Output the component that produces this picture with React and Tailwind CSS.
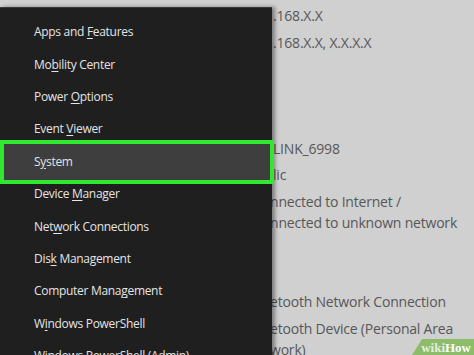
const items = [
  ["Apps and ", "F", "eatures"],
  ["Mo", "b", "ility Center"],
  ["Power ", "O", "ptions"],
  ["Event ", "V", "iewer"],
  ["S", "y", "stem"],
  ["Device ", "M", "anager"],
  ["Net", "w", "ork Connections"],
  ["Dis", "k", " Management"],
  ["Computer Mana", "g", "ement"],
  ["W", "i", "ndows PowerShell"],
  ["Windows PowerShell (", "A", "dmin)"],
];

// text of the network page that sits behind the menu
const rows = [
  [".168.X.X"],
  [".168.X.X, X.X.X.X"],
  [],
  [],
  [],
  ["LINK_6998"],
  ["lic"],
  ["nnected to Internet /", "nnected to unknown network"],
  [],
  [],
  ["etooth Network Connection"],
  ["etooth Device (Personal Area", "work)"],
];

function MenuItem({ parts, active }) {
  const [pre, key, post] = parts;
  return (
    <div className="relative flex h-[32.4px] items-center pl-[34px]">
      {active && (
        <span className="absolute -top-[6px] -bottom-[6px] left-0 -right-[2px] border-4 border-[#2fe82f] bg-[#3e3e3e]" />
      )}
      <span className="relative whitespace-nowrap">
        {pre}
        <span className="underline decoration-1 underline-offset-[2px]">{key}</span>
        {post}
      </span>
    </div>
  );
}

export default function App() {
  return (
    <div className="relative h-[355px] w-[474px] overflow-hidden bg-[#d0d0d0] font-['Open_Sans',sans-serif]">
      {/* page behind */}
      <div className="flex flex-col gap-[5.5px] pl-[273px] pt-[5px] text-[14px] tracking-[-0.2px] text-[#575757]">
        {rows.map((r, i) => (
          <div key={i} className="min-h-[21px]">
            {r.map((t, j) => (
              <div key={j} className={`whitespace-nowrap leading-[21px] ${t.startsWith("nnected") || t.startsWith("etooth") || t === "work)" ? "-ml-[3px]" : ""}`}>
                {t}
              </div>
            ))}
          </div>
        ))}
      </div>

      {/* Win+X menu */}
      <div className="absolute left-0 top-[7px] bottom-[-20px] w-[272px] border-t border-[#3a3a3a] bg-[#1f1f1f] pt-[8px] text-[12px] tracking-[-0.3px] text-[#e4e4e4] shadow-[3px_0_4px_rgba(0,0,0,0.4)]">
        {items.map((p, i) => (
          <MenuItem key={i} parts={p} active={i === 4} />
        ))}
      </div>

      {/* watermark */}
      <div className="absolute bottom-0 right-0 h-[16px] w-[62px]">
        <svg className="absolute inset-0" width="62" height="16" viewBox="0 0 62 16">
          <polygon points="10,0 62,0 62,16 0,16" fill="#8dbd6a" />
        </svg>
        <div className="relative flex h-full items-center justify-end pr-[3px] font-['Liberation_Serif',serif] text-[13px] font-bold leading-none">
          <span className="text-[#e6eedc]">wiki</span>
          <span className="text-white">How</span>
        </div>
      </div>
    </div>
  );
}
